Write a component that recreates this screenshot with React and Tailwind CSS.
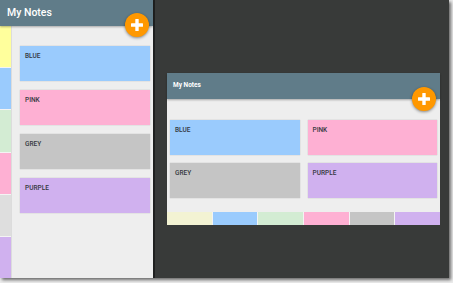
import React from "react";

const Plus = ({ size = 12 }) => (
  <svg width={size} height={size} viewBox="0 0 12 12">
    <rect x="4.3" y="0" width="3.4" height="12" rx="0.5" fill="white" />
    <rect x="0" y="4.3" width="12" height="3.4" rx="0.5" fill="white" />
  </svg>
);

const Fab = ({ className }) => (
  <div
    className={
      "absolute w-6 h-6 rounded-full bg-[#ff9800] flex items-center justify-center shadow-[0_1px_3px_rgba(0,0,0,0.45)] " +
      className
    }
  >
    <Plus />
  </div>
);

const cards = [
  { label: "BLUE", bg: "bg-[#9acbfd]" },
  { label: "PINK", bg: "bg-[#feb0d3]" },
  { label: "GREY", bg: "bg-[#c5c5c5]" },
  { label: "PURPLE", bg: "bg-[#d0b1ef]" },
];

const Card = ({ label, bg, className = "" }) => (
  <div
    className={
      "h-[35px] pl-[5px] pt-[6.5px] text-[6.5px] font-medium text-[#343840] leading-none shadow-[0_0_1px_rgba(0,0,0,0.25)] " +
      bg +
      " " +
      className
    }
  >
    {label}
  </div>
);

export default function App() {
  return (
    <div
      className="w-[453px] h-[283px] bg-[#ececec] overflow-hidden"
      style={{ fontFamily: "Roboto, 'Liberation Sans', sans-serif" }}
    >
      <div className="flex w-[449px] h-[278px] shadow-[2px_2px_3px_rgba(0,0,0,0.55)]">
        {/* Left phone */}
        <div className="relative w-[153px] h-full flex flex-col bg-[#eeeeee]">
          <div className="h-[26px] bg-[#607c89] flex items-center pl-[7px] text-white text-[10.5px] font-medium shadow-[0_1px_2px_rgba(0,0,0,0.3)] z-10">
            My Notes
          </div>
          <Fab className="left-[125px] top-[13px] z-20" />
          <div className="flex flex-1">
            <div className="w-[12px] flex flex-col gap-px bg-[#f4f4f4] border-r border-[#dcdcdc]">
              <div className="flex-1 bg-[#ffff9c]" />
              <div className="flex-1 bg-[#9acbfd]" />
              <div className="flex-1 bg-[#d3ecd3]" />
              <div className="flex-1 bg-[#feb0d3]" />
              <div className="flex-1 bg-[#dedede]" />
              <div className="flex-1 bg-[#d0b1ef]" />
            </div>
            <div className="flex-1 flex flex-col gap-[9px] pt-[20px] pl-[8px] pr-[3px]">
              {cards.map((c) => (
                <Card key={c.label} {...c} />
              ))}
            </div>
          </div>
        </div>
        <div className="w-[2px] bg-[#1f2020]" />
        {/* Right tablet */}
        <div className="flex-1 bg-[#383a39] pl-[12px] pt-[73px]">
          <div className="relative w-[273px] h-[152px] flex flex-col">
            <div className="h-[26px] bg-[#607c89] flex items-center pl-[6px] text-white text-[6.5px] font-bold shadow-[0_1px_2px_rgba(0,0,0,0.3)] z-10">
              My Notes
            </div>
            <Fab className="left-[245px] top-[14px] z-20" />
            <div className="flex-1 bg-[#eeeeee] grid grid-cols-2 gap-x-[8px] gap-y-[8px] content-start px-[3px] pt-[21px]">
              {cards.map((c) => (
                <Card key={c.label} {...c} />
              ))}
            </div>
            <div className="h-[13px] flex gap-px bg-[#f4f4f4]">
              <div className="flex-1 bg-[#f3f3d3]" />
              <div className="flex-1 bg-[#9acbfd]" />
              <div className="flex-1 bg-[#d3ecd3]" />
              <div className="flex-1 bg-[#feb0d3]" />
              <div className="flex-1 bg-[#c5c5c5]" />
              <div className="flex-1 bg-[#d0b1ef]" />
            </div>
          </div>
        </div>
      </div>
    </div>
  );
}
